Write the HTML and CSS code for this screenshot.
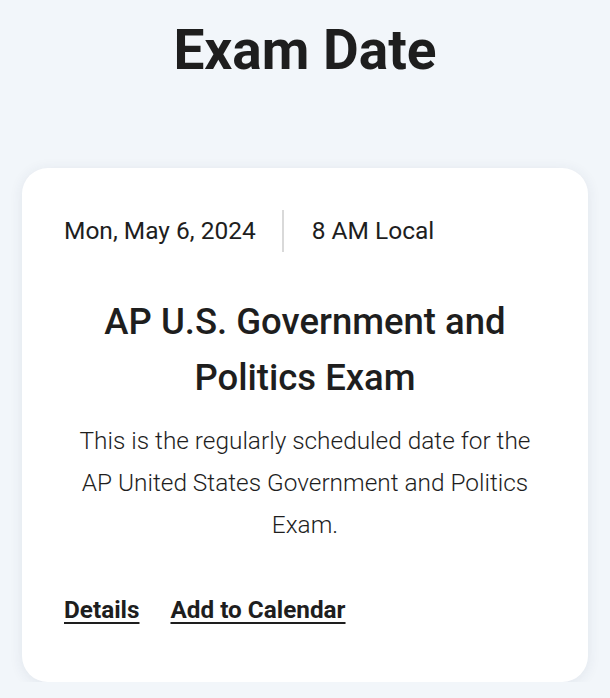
FILE: index.html
```html
<!DOCTYPE html>
<html lang="en">
<head>
<meta charset="utf-8">
<title>Exam Date</title>
<link rel="stylesheet" href="styles.css">
</head>
<body>
<main class="page">
  <h1 class="page-title">Exam Date</h1>
  <section class="card">
    <div class="meta">
      <span class="meta-date">Mon, May 6, 2024</span>
      <span class="meta-divider"></span>
      <span class="meta-time">8 AM Local</span>
    </div>
    <h2 class="exam-title">AP U.S. Government and Politics Exam</h2>
    <p class="exam-desc">This is the regularly scheduled date for the AP United States Government and Politics Exam.</p>
    <div class="links">
      <a class="link" href="#">Details</a>
      <a class="link" href="#">Add to Calendar</a>
    </div>
  </section>
</main>
</body>
</html>
```
FILE: styles.css
```css
html, body {
  margin: 0;
  padding: 0;
}
body {
  background: #f2f6fa;
  font-family: Roboto, "Liberation Sans", sans-serif;
  color: #1e1e1e;
}
.page {
  padding: 0 22px;
}
.page-title {
  margin: 0;
  padding-top: 16px;
  text-align: center;
  font-size: 55px;
  font-weight: 700;
  line-height: 68px;
  color: #1e1e1e;
}
.card {
  margin-top: 84px;
  background: #ffffff;
  border-radius: 26px;
  box-shadow: 0 2px 14px rgba(40, 60, 90, 0.09);
  padding: 42px 42px 58px;
}
.meta {
  display: flex;
  align-items: center;
  font-size: 24.5px;
  line-height: 42px;
  color: #1e1e1e;
}
.meta-divider {
  width: 2px;
  height: 42px;
  background: #d9d9d9;
  margin: 0 28px 0 26px;
}
.exam-title {
  margin: 42px 0 0;
  text-align: center;
  font-size: 36.5px;
  font-weight: 500;
  line-height: 56px;
  color: #1e1e1e;
}
.exam-desc {
  margin: 14px 0 0;
  text-align: center;
  font-size: 24.4px;
  font-weight: 300;
  line-height: 42px;
  color: #1e1e1e;
}
.links {
  display: flex;
  gap: 31px;
  margin-top: 49px;
}
.link {
  font-size: 24.3px;
  font-weight: 700;
  color: #1e1e1e;
  text-decoration: underline;
  text-underline-offset: 4px;
  text-decoration-thickness: 2px;
}
```
